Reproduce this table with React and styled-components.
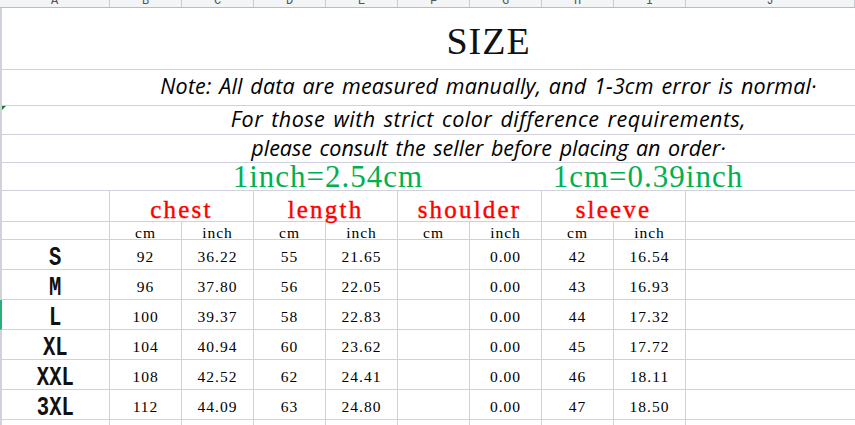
import styled, { createGlobalStyle } from "styled-components";

const LINE = "#d0d1db";

const GlobalStyle = createGlobalStyle`
  body {
    margin: 0;
    background: #ffffff;
    overflow: hidden;
    font-family: "Liberation Serif", serif;
  }
`;

const Sheet = styled.div`
  width: 855px;
  height: 425px;
  display: flex;
  flex-direction: column;
  overflow: hidden;
`;

const HeaderRow = styled.div`
  flex-shrink: 0;
  display: grid;
  grid-template-columns: 110px repeat(8, 72px) 1fr;
  height: 8px;
  box-sizing: border-box;
  background: #f3f4f6;
  border-bottom: 1px solid #b9bcc6;
`;

const HeadCell = styled.div`
  display: flex;
  align-items: flex-end;
  justify-content: center;
  overflow: hidden;
  border-right: 1px solid #c9ccd5;
  font-family: "Liberation Mono", monospace;
  font-size: 12px;
  line-height: 12px;
  color: #555;
`;

const FullRow = styled.div`
  position: relative;
  flex-shrink: 0;
  height: ${(p) => p.h}px;
  box-sizing: border-box;
  border-left: 2px solid ${LINE};
  border-bottom: 1px solid ${LINE};
  padding-top: ${(p) => p.pt}px;
  padding-left: ${(p) => p.pl || 120}px;
  display: flex;
  justify-content: center;
  white-space: nowrap;
`;

const ErrorMark = styled.span`
  position: absolute;
  left: 0;
  top: 0;
  width: 0;
  height: 0;
  border-top: 4px solid #1e7b34;
  border-right: 4px solid transparent;
`;

const Title = styled.div`
  font-family: "Liberation Serif", serif;
  font-size: 38px;
  line-height: 38px;
  letter-spacing: 1px;
  color: #111;
`;

const Note = styled.div`
  font-family: "Open Sans", "DejaVu Sans", sans-serif;
  font-style: italic;
  font-size: 21.5px;
  line-height: 21px;
  letter-spacing: ${(p) => p.ls || 0}px;
  word-spacing: 2px;
  color: #000;
`;

const ConvertRow = styled(FullRow)`
  justify-content: flex-start;
`;

const Convert = styled.div`
  width: 320px;
  text-align: center;
  font-family: "Liberation Serif", serif;
  font-size: 31px;
  line-height: 24px;
  letter-spacing: 1px;
  color: #00b050;
`;

const GridRow = styled.div`
  flex-shrink: 0;
  display: grid;
  grid-template-columns: 108px repeat(8, 72px) 1fr;
  height: ${(p) => p.h}px;
  box-sizing: border-box;
  border-left: 2px solid ${(p) => (p.marked ? "#25b07a" : LINE)};
  border-bottom: 1px solid ${LINE};
`;

const Cell = styled.div`
  grid-column: span ${(p) => p.span || 1};
  border-right: ${(p) => (p.open ? "none" : `1px solid ${LINE}`)};
  display: flex;
  justify-content: center;
  padding-top: ${(p) => p.pt || 0}px;
  white-space: nowrap;
`;

const Part = styled.span`
  font-family: "Liberation Serif", serif;
  font-size: 25px;
  line-height: 20px;
  letter-spacing: 2.2px;
  color: #ff0000;
  -webkit-text-stroke: 0.4px #ff0000;
`;

const Unit = styled.span`
  font-family: "Liberation Serif", serif;
  font-size: 15.5px;
  line-height: 12px;
  letter-spacing: 1px;
  color: #000;
`;

const SizeLabel = styled.span`
  display: inline-block;
  font-family: "Liberation Mono", monospace;
  font-weight: bold;
  font-size: 27px;
  line-height: 20px;
  color: #111;
  transform: scaleX(0.76);
`;

const columns = ["A", "B", "C", "D", "E", "F", "G", "H", "I", "J"];

const rows = [
  ["S", "92", "36.22", "55", "21.65", "", "0.00", "42", "16.54"],
  ["M", "96", "37.80", "56", "22.05", "", "0.00", "43", "16.93"],
  ["L", "100", "39.37", "58", "22.83", "", "0.00", "44", "17.32"],
  ["XL", "104", "40.94", "60", "23.62", "", "0.00", "45", "17.72"],
  ["XXL", "108", "42.52", "62", "24.41", "", "0.00", "46", "18.11"],
  ["3XL", "112", "44.09", "63", "24.80", "", "0.00", "47", "18.50"],
];

export default function App() {
  return (
    <>
      <GlobalStyle />
      <Sheet>
        <HeaderRow>
          {columns.map((c) => (
            <HeadCell key={c}>{c}</HeadCell>
          ))}
        </HeaderRow>

        <FullRow h={62} pt={14}>
          <Title>SIZE</Title>
        </FullRow>
        <FullRow h={36} pt={5}>
          <Note ls={0.15}>Note: All data are measured manually, and 1-3cm error is normal·</Note>
        </FullRow>
        <FullRow h={29} pt={2}>
          <ErrorMark />
          <Note ls={0.5}>For those with strict color difference requirements,</Note>
        </FullRow>
        <FullRow h={28} pt={2}>
          <Note>please consult the seller before placing an order·</Note>
        </FullRow>
        <ConvertRow h={28} pt={2} pl={166}>
          <Convert>1inch=2.54cm</Convert>
          <Convert>1cm=0.39inch</Convert>
        </ConvertRow>

        <GridRow h={31}>
          <Cell />
          {["chest", "length", "shoulder", "sleeve"].map((p) => (
            <Cell key={p} span={2} pt={9}>
              <Part>{p}</Part>
            </Cell>
          ))}
          <Cell open />
        </GridRow>

        <GridRow h={18}>
          <Cell />
          {[0, 1, 2, 3].flatMap((i) => [
            <Cell key={`c${i}`} pt={5}>
              <Unit>cm</Unit>
            </Cell>,
            <Cell key={`i${i}`} pt={5}>
              <Unit>inch</Unit>
            </Cell>,
          ])}
          <Cell open />
        </GridRow>

        {rows.map((r) => (
          <GridRow key={r[0]} h={30} marked={r[0] === "L"}>
            <Cell pt={8}>
              <SizeLabel>{r[0]}</SizeLabel>
            </Cell>
            {r.slice(1).map((v, i) => (
              <Cell key={i} pt={11}>
                <Unit>{v}</Unit>
              </Cell>
            ))}
            <Cell open />
          </GridRow>
        ))}

        <GridRow h={10}>
          {columns.map((c, i) => (
            <Cell key={c} open={i === 9} />
          ))}
        </GridRow>
      </Sheet>
    </>
  );
}
